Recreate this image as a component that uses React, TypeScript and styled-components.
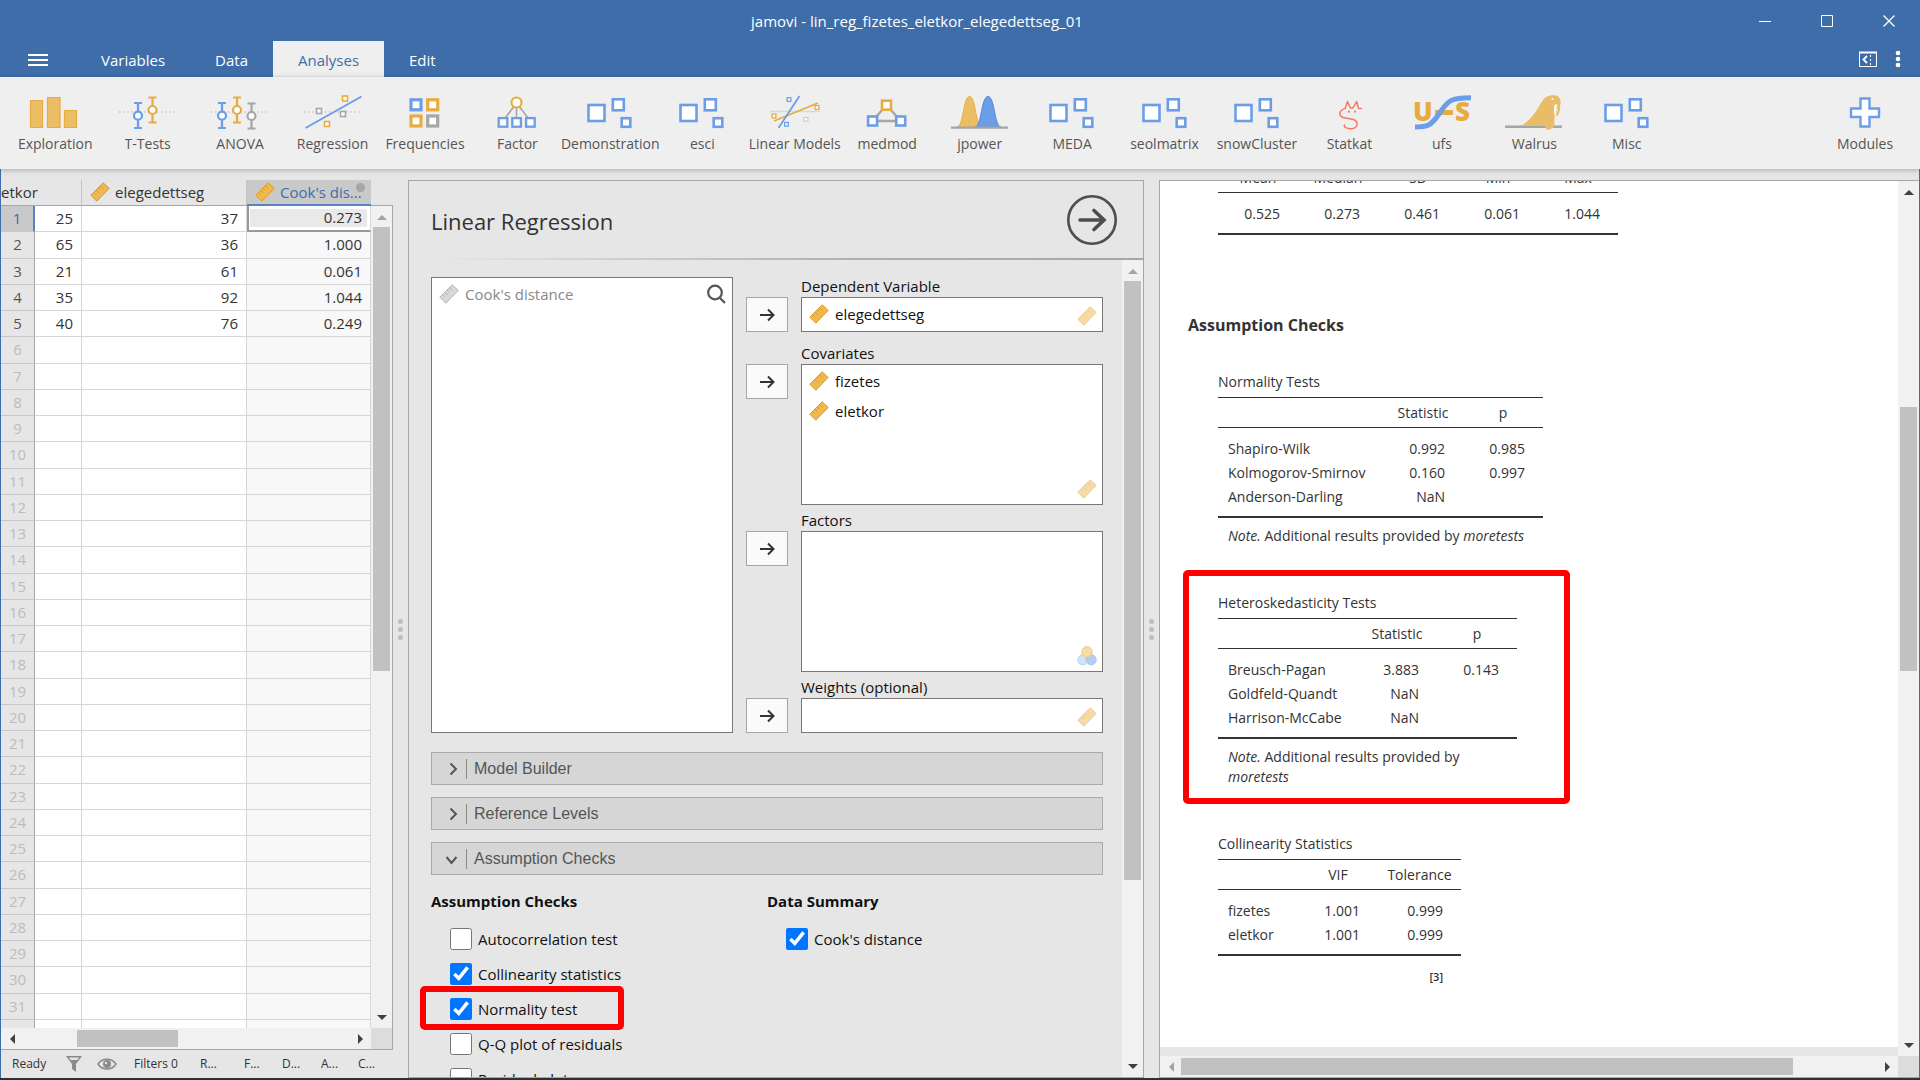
import React from "react";
import styled, { createGlobalStyle, css } from "styled-components";

const BLUE = "#3e6da9";
const ICON_BLUE = "#6b9de8";
const ICON_ORANGE = "#e6ac40";
const ICON_GREY = "#a6a6a6";

const GlobalStyle = createGlobalStyle`
  *, *::before, *::after { box-sizing: border-box; }
  body {
    margin: 0;
    background: #2d3036;
    color: #333;
    font-family: "Open Sans", "Noto Sans", sans-serif;
    font-size: 15px;
    line-height: 20px;
  }
  button { font: inherit; color: inherit; border: 0; padding: 0; background: none; }
`;

/* ---------- window ---------- */

const Window = styled.div`
  display: flex;
  flex-direction: column;
  height: 100vh;
  overflow: hidden;
  border-bottom: 2px solid #2d3036;
`;

const TitleBar = styled.header`
  display: grid;
  grid-template-columns: 1fr auto 1fr;
  align-items: center;
  flex: none;
  height: 41px;
  background: ${BLUE};
  color: #fff;
`;

const WindowTitle = styled.h1`
  grid-column: 2;
  margin: 0 86px 0 0;
  font-size: 15px;
  font-weight: 400;
`;

const WindowButtons = styled.div`
  display: flex;
  justify-content: flex-end;
`;

const WindowButton = styled.button`
  display: flex;
  align-items: center;
  justify-content: center;
  width: 62px;
  height: 40px;
`;

const TabBar = styled.nav`
  display: flex;
  flex: none;
  height: 36px;
  background: ${BLUE};
  color: #fff;
`;

const MenuButton = styled.button`
  display: flex;
  align-items: center;
  justify-content: center;
  width: 76px;
  padding-top: 2px;
`;

const Tab = styled.button<{ $active?: boolean }>`
  padding: 2px 25px 0;
  ${(p) => p.$active && css`background: #efefef; color: ${BLUE};`}
`;

const TabTools = styled.div`
  display: flex;
  align-items: center;
  gap: 18px;
  margin-left: auto;
  padding: 3px 19px 0 0;
`;

const Ribbon = styled.div`
  position: relative;
  z-index: 1;
  display: flex;
  flex: none;
  height: 92px;
  padding: 0 1px 0 9px;
  background: #efefef;
  box-shadow: 0 1px 5px rgba(0, 0, 0, 0.28);
`;

const RibbonItems = styled.div`
  display: grid;
  grid-template-columns: repeat(18, 1fr);
  flex: 1;
  padding-right: 138px;
`;

const RibbonButton = styled.button<{ $fixed?: boolean }>`
  display: flex;
  flex-direction: column;
  align-items: center;
  gap: 4px;
  min-width: 0;
  padding-top: 17px;
  color: #555;
  font-size: 14px;
  ${(p) => p.$fixed && css`width: 108px;`}
`;

const RibbonLabel = styled.span`
  width: max-content;
  max-width: 98px;
  overflow: hidden;
  white-space: nowrap;
`;

const Workspace = styled.main`
  display: flex;
  flex: 1;
  min-height: 0;
  padding-top: 11px;
  background: #e6e6e6;
  border-left: 1px solid ${BLUE};
  border-right: 1px solid ${BLUE};
`;

const Splitter = styled.div`
  display: flex;
  flex-direction: column;
  align-items: center;
  justify-content: center;
  gap: 3px;
  flex: none;
  width: 15px;
`;

const SplitterDot = styled.span`
  width: 5px;
  height: 5px;
  border-radius: 50%;
  background: #bdbdbd;
`;

/* ---------- scroll bars ---------- */

const Bar = styled.div<{ $horizontal?: boolean }>`
  display: flex;
  flex: none;
  flex-direction: ${(p) => (p.$horizontal ? "row" : "column")};
  ${(p) => (p.$horizontal ? "height: 21px;" : "width: 21px;")}
  background: #f1f1f1;
`;

const BarButton = styled.button`
  display: flex;
  align-items: center;
  justify-content: center;
  flex: none;
  width: 21px;
  height: 21px;
`;

const BarSpace = styled.div<{ $grow: number }>`
  flex: ${(p) => p.$grow} 1 0;
`;

const BarThumb = styled.div<{ $grow: number; $horizontal?: boolean }>`
  flex: ${(p) => p.$grow} 1 0;
  margin: ${(p) => (p.$horizontal ? "2px 0" : "0 2px")};
  background: #c1c1c1;
`;

const BarCorner = styled.div`
  flex: none;
  width: 21px;
  height: 21px;
  background: #dcdcdc;
`;

type ScrollProps = {
  horizontal?: boolean;
  parts: [number, number, number];
  startDisabled?: boolean;
};

function Arrow({ d, muted }: { d: string; muted?: boolean }) {
  return (
    <svg width="10" height="10" viewBox="0 0 10 10" aria-hidden="true">
      <path d={d} fill={muted ? "#a3a3a3" : "#404040"} />
    </svg>
  );
}

function ScrollBar({ horizontal, parts, startDisabled }: ScrollProps) {
  const [before, thumb, after] = parts;
  return (
    <Bar $horizontal={horizontal}>
      <BarButton aria-label="Scroll back">
        <Arrow muted={startDisabled} d={horizontal ? "M8 0V10L3 5Z" : "M0 8H10L5 3Z"} />
      </BarButton>
      <BarSpace $grow={before} />
      <BarThumb $grow={thumb} $horizontal={horizontal} />
      <BarSpace $grow={after} />
      <BarButton aria-label="Scroll forward">
        <Arrow d={horizontal ? "M2 0V10L7 5Z" : "M0 2H10L5 7Z"} />
      </BarButton>
    </Bar>
  );
}

/* ---------- data sheet ---------- */

const SheetPane = styled.section`
  display: flex;
  flex-direction: column;
  flex: none;
  width: 392px;
`;

const Sheet = styled.div`
  display: flex;
  flex: 1;
  min-height: 0;
`;

const SheetView = styled.div`
  flex: 1;
  min-width: 0;
  overflow: hidden;
`;

const SheetScroll = styled.div`
  display: flex;
  margin-top: 25px;
  border-top: 1px solid #a6a6a6;
  border-right: 1px solid #a6a6a6;
`;

const SheetFoot = styled.div`
  display: flex;
  flex: none;
  border-bottom: 1px solid #a6a6a6;
  border-right: 1px solid #a6a6a6;
  background: #f1f1f1;

  > :first-child { flex: 1; }
`;

const DataTable = styled.table`
  width: 100%;
  table-layout: fixed;
  border-collapse: separate;
  border-spacing: 0;
`;

const ColumnHead = styled.th<{ $selected?: boolean; $first?: boolean }>`
  position: relative;
  height: 26px;
  padding: 0 0 1px ${(p) => (p.$first ? 0 : 8)}px;
  overflow: hidden;
  border-bottom: 1px solid #a6a6a6;
  border-right: 1px solid #c4c4c4;
  font-weight: 400;
  text-align: left;
  white-space: nowrap;
  ${(p) =>
    p.$selected &&
    css`
      background: #c9c9c9;
      border-bottom: 2px solid #5684c0;
      border-right: 0;
      color: ${BLUE};
    `}
`;

const HeadContent = styled.span`
  display: flex;
  align-items: center;
  gap: 5px;
`;

const HeadBadge = styled.span`
  position: absolute;
  top: 3px;
  right: 6px;
  width: 9px;
  height: 9px;
  border-radius: 50%;
  background: #a6a6a6;
`;

const DataRow = styled.tr`
  height: 26px;
  &:nth-child(4n + 2) { height: 27px; }
`;

const RowHead = styled.th<{ $selected?: boolean; $empty?: boolean }>`
  padding: 0 0 2px;
  border-bottom: 1px solid #c8c8c8;
  border-right: 1px solid #a6a6a6;
  background: #e6e6e6;
  color: ${(p) => (p.$empty ? "#bcbcbc" : "#555")};
  font-weight: 400;
  ${(p) =>
    p.$selected &&
    css`
      background: #c9c9c9;
      border-right: 2px solid #5684c0;
      color: ${BLUE};
    `}
`;

const Cell = styled.td<{ $computed?: boolean; $selected?: boolean }>`
  padding: 0 8px 2px 0;
  border-bottom: 1px solid #d6d6d6;
  border-right: 1px solid #d6d6d6;
  background: ${(p) => (p.$computed ? "#f8f8f8" : "#fff")};
  text-align: right;
  ${(p) =>
    p.$selected &&
    css`
      background: #e9e9e9;
      border-bottom: 2px solid #999;
      box-shadow: inset 2px 0 #999, inset 0 0 0 3px #fff;
    `}
`;

const StatusBar = styled.footer`
  display: flex;
  align-items: center;
  flex: none;
  height: 28px;
  padding-left: 11px;
  font-size: 12px;
`;

const StatusItem = styled.span<{ $width: number }>`
  display: flex;
  width: ${(p) => p.$width}px;
`;

/* ---------- options ---------- */

const OptionsPane = styled.section`
  display: flex;
  flex-direction: column;
  flex: none;
  width: 736px;
  border: 1px solid #a6a6a6;
`;

const OptionsHead = styled.div`
  display: flex;
  align-items: center;
  justify-content: space-between;
  flex: none;
  height: 79px;
  padding: 0 26px 0 22px;
  border-bottom: 2px solid;
  border-image: linear-gradient(90deg, #e6e6e6 4%, #b0b0b0 60%, #a6a6a6) 1;
`;

const OptionsTitle = styled.h2`
  margin: 0;
  padding-top: 2px;
  font-size: 22px;
  font-weight: 400;
  line-height: 30px;
`;

const RunButton = styled.button`
  display: flex;
  width: 50px;
  height: 50px;
`;

const OptionsBody = styled.div`
  display: flex;
  flex: 1;
  min-height: 0;
`;

const OptionsContent = styled.div`
  flex: 1;
  min-width: 0;
  overflow: hidden;
  padding: 17px 19px 0 22px;
  color: #111;
`;

const Supplier = styled.div`
  display: grid;
  grid-template-columns: 1fr 42px 1fr;
  column-gap: 13px;
  margin-bottom: 19px;
`;

const VariableList = styled.div<{ $height?: number }>`
  position: relative;
  height: ${(p) => (p.$height ? p.$height + "px" : "auto")};
  padding-top: 1px;
  border: 1px solid #777;
  background: #fff;
`;

const VariableItem = styled.div<{ $muted?: boolean }>`
  display: flex;
  align-items: center;
  gap: 6px;
  height: 30px;
  padding-left: 7px;
  color: ${(p) => (p.$muted ? "#888" : "#111")};
`;

const SearchButton = styled.button`
  position: absolute;
  top: 6px;
  right: 6px;
  display: flex;
`;

const PermittedType = styled.span`
  position: absolute;
  right: 5px;
  bottom: 5px;
  display: flex;
  opacity: 0.5;
`;

const Targets = styled.div`
  display: grid;
  grid-template-columns: subgrid;
  grid-column: 2 / 4;
  row-gap: 6px;
`;

const Target = styled.div<{ $spaced?: boolean }>`
  display: grid;
  grid-template-columns: subgrid;
  grid-column: 1 / 3;
  ${(p) => p.$spaced && css`padding-bottom: 6px;`}
`;

const TargetLabel = styled.span`
  grid-column: 2;
  height: 20px;
  line-height: 18px;
`;

const AssignButton = styled.button`
  display: flex;
  align-items: center;
  justify-content: center;
  height: 35px;
  border: 1px solid #a6a6a6;
  background: #fafafa;
`;

const Collapser = styled.button`
  display: flex;
  align-items: center;
  width: 100%;
  height: 33px;
  margin-bottom: 12px;
  padding-left: 13px;
  border: 1px solid #a9a9a9;
  background: #d6d6d6;
  color: #555;
  font-family: "Liberation Sans", Arial, sans-serif;
  font-size: 16px;
`;

const CollapserLabel = styled.span`
  margin-left: 5px;
  padding-left: 7px;
  border-left: 1px solid #888;
`;

const CheckColumns = styled.div`
  display: grid;
  grid-template-columns: 1fr 1fr;
  padding-top: 4px;
`;

const CheckGroup = styled.fieldset`
  display: flex;
  flex-direction: column;
  align-items: flex-start;
  gap: 13px;
  min-width: 0;
  margin: 0;
  padding: 0 0 0 19px;
  border: 0;
`;

const CheckLegend = styled.legend`
  margin-left: -19px;
  padding: 0;
  margin-bottom: 17px;
  font-weight: 700;
`;

const CheckLabel = styled.label`
  position: relative;
  display: flex;
  align-items: center;
  gap: 6px;
  height: 22px;
`;

const CheckBox = styled.input`
  width: 22px;
  height: 22px;
  margin: 0;
  accent-color: #0075ff;
`;

const CheckMarker = styled.span`
  position: absolute;
  top: -12px;
  left: -30px;
  width: 204px;
  height: 44px;
  border: 6px solid #f00;
  border-radius: 5px;
`;

/* ---------- results ---------- */

const ResultsPane = styled.section`
  display: flex;
  flex: 1;
  flex-direction: column;
  min-width: 0;
  border: solid #a6a6a6;
  border-width: 1px 0 1px 1px;
`;

const ResultsBody = styled.div`
  display: flex;
  flex: 1;
  min-height: 0;
`;

const ResultsView = styled.div`
  flex: 1;
  min-width: 0;
  overflow: hidden;
  padding-left: 3px;
  border-bottom: 9px solid #e6e6e6;
  background: #fff;
`;

const ResultsContent = styled.div`
  margin-top: -19px;
  padding-left: 25px;
  font-size: 14px;
`;

const ResultsFoot = styled.div`
  display: flex;
  flex: none;

  > :first-child { flex: 1; }
`;

const ResultsHeading = styled.h3`
  margin: 78px 0 35px;
  font-size: 16px;
  font-weight: 700;
  line-height: 24px;
`;

const ResultBlock = styled.div`
  position: relative;
  width: max-content;
  margin: 0 0 47px 30px;
`;

const ResultTable = styled.table<{ $width: number }>`
  width: ${(p) => p.$width}px;
  table-layout: fixed;
  border-collapse: separate;
  border-spacing: 0;
`;

const Caption = styled.caption`
  padding-bottom: 5px;
  text-align: left;
  white-space: nowrap;
`;

const ResultHead = styled.th`
  height: 31px;
  padding: 0;
  border: solid #333;
  border-width: 1px 0;
  font-weight: 400;
`;

const ResultBody = styled.tbody`
  tr:first-child > * { height: 33px; padding-top: 9px; }
  tr:last-child > * { height: 33px; padding-bottom: 7px; border-bottom: 2px solid #333; }
  tr:first-child:last-child > * { height: 42px; }
`;

const RowLabel = styled.th`
  height: 24px;
  padding: 0 0 0 10px;
  font-weight: 400;
  text-align: left;
  white-space: nowrap;
`;

const ResultCell = styled.td`
  height: 24px;
  padding: 0 18px 0 0;
  text-align: right;
`;

const NoteCell = styled.td`
  padding: 8px 0 0 10px;
`;

const Reference = styled.td`
  padding: 11px 18px 0 0;
  font-size: 11px;
  font-weight: 600;
  text-align: right;
`;

const BlockMarker = styled.span`
  position: absolute;
  inset: -23px -53px -17px -35px;
  border: 6px solid #f00;
  border-radius: 5px;
`;

/* ---------- icons ---------- */

type RulerTone = "orange" | "grey";

function Ruler({ tone = "orange" }: { tone?: RulerTone }) {
  const fill = tone === "orange" ? "#f0b850" : "#d8d8d8";
  const line = tone === "orange" ? "#e09a20" : "#b4b4b4";
  return (
    <svg width="20" height="20" viewBox="0 0 20 20" aria-hidden="true">
      <path d="M13.2 .8 19.2 6.400 6.800 19.200 .8 13.200Z" fill={fill} stroke={line} />
      <path d="M3.500 10.500l2 2M5.700 8.200l3 3M8 6l2 2M10.300 3.600l3 3" stroke={line} fill="none" />
    </svg>
  );
}

function Nominal() {
  return (
    <svg width="20" height="20" viewBox="0 0 20 20" aria-hidden="true">
      <circle cx="5.8" cy="13.8" r="5" fill="#a8c6f4" stroke={ICON_BLUE} />
      <circle cx="14.2" cy="13.8" r="5" fill={ICON_BLUE} stroke="#5684d0" />
      <circle cx="10" cy="5.8" r="5.2" fill="#f0b850" stroke="#e09a20" />
    </svg>
  );
}

function Sq({ x, y, s, c, w = 2.6 }: { x: number; y: number; s: number; c: string; w?: number }) {
  return <rect x={x - s / 2} y={y - s / 2} width={s} height={s} fill="#fff" stroke={c} strokeWidth={w} />;
}

function Whisker({ x, top, mid, c }: { x: number; top: number; mid: number; c: string }) {
  return (
    <g stroke={c} strokeWidth="2.2" fill="none">
      <path d={`M${x - 4} ${top + 1}h8M${x - 4} ${top + 26}h8M${x} ${top + 1}v25`} />
      <circle cx={x} cy={mid} r="4" fill="#fff" />
    </g>
  );
}

const Dotted = () => (
  <path d="M1 18H59" stroke="#aaa" strokeWidth="1.2" strokeDasharray="1.2 3" fill="none" />
);

const blocks = (
  <>
    <Sq x={16.5} y={19} s={16} c={ICON_BLUE} />
    <Sq x={38.3} y={10.8} s={11} c={ICON_BLUE} />
    <Sq x={46} y={28.5} s={8.6} c={ICON_BLUE} />
  </>
);

const drawings: Record<string, React.ReactNode> = {
  bars: (
    <g fill="#ebbe66" stroke={ICON_ORANGE} strokeWidth="1.2">
      <path d="M5.5 6.5h12v27h-12ZM22.5 3.5h12.5v30h-12.5ZM39.5 16.5h12v17h-12Z" />
    </g>
  ),
  ttest: (
    <>
      <Dotted />
      <Whisker x={20} top={8} mid={21.7} c={ICON_BLUE} />
      <Whisker x={34.5} top={2.5} mid={16} c={ICON_ORANGE} />
    </>
  ),
  anova: (
    <>
      <Dotted />
      <Whisker x={12} top={8} mid={21.7} c={ICON_BLUE} />
      <Whisker x={27} top={2.5} mid={16} c={ICON_ORANGE} />
      <Whisker x={41.5} top={8.5} mid={22} c={ICON_GREY} />
    </>
  ),
  regression: (
    <>
      <Dotted />
      <path d="M2.5 34 58.5 2.5" stroke={ICON_BLUE} strokeWidth="2" />
      <Sq x={42} y={4.5} s={5} c={ICON_ORANGE} w={1.6} />
      <Sq x={16} y={17} s={5} c={ICON_GREY} w={1.6} />
      <Sq x={40} y={20} s={5} c={ICON_GREY} w={1.6} />
      <Sq x={24} y={30} s={5} c={ICON_ORANGE} w={1.6} />
    </>
  ),
  frequencies: (
    <>
      <Sq x={21} y={10.8} s={10} c={ICON_BLUE} w={3.2} />
      <Sq x={37.7} y={10.8} s={10} c={ICON_ORANGE} w={3.2} />
      <Sq x={21} y={27} s={10} c={ICON_ORANGE} w={3.2} />
      <Sq x={37.7} y={27} s={10} c={ICON_GREY} w={3.2} />
    </>
  ),
  factor: (
    <>
      <path d="M29.5 9 16 27M29.5 9V27M29.5 9 43.5 27" stroke={ICON_GREY} strokeWidth="1.6" />
      <circle cx="29.5" cy="8.5" r="5" fill="#fff" stroke={ICON_ORANGE} strokeWidth="2.2" />
      <Sq x={16} y={28.4} s={8.6} c={ICON_BLUE} w={2.3} />
      <Sq x={29.6} y={28.4} s={8.6} c={ICON_BLUE} w={2.3} />
      <Sq x={43.4} y={28.4} s={8.6} c={ICON_BLUE} w={2.3} />
    </>
  ),
  blocks,
  linear: (
    <>
      <path d="M5 17.5H55" stroke="#d8d8d8" strokeWidth="1.6" />
      <path d="M9 27 53 9" stroke={ICON_ORANGE} strokeWidth="1.7" />
      <path d="M13.5 34 34.5 2" stroke={ICON_BLUE} strokeWidth="1.7" />
      <Sq x={24} y={5.5} s={3.6} c={ICON_BLUE} w={1.3} />
      <Sq x={52} y={13.5} s={3.8} c={ICON_ORANGE} w={1.3} />
      <Sq x={9} y={22} s={3.8} c={ICON_ORANGE} w={1.3} />
      <Sq x={41} y={25.3} s={3.8} c="#d0d0d0" w={1.3} />
      <Sq x={21.5} y={30.3} s={3.6} c={ICON_BLUE} w={1.3} />
    </>
  ),
  medmod: (
    <>
      <path d="M29.5 11 15.5 27H43.7Z" stroke={ICON_GREY} strokeWidth="2.4" fill="none" />
      <Sq x={29.5} y={11.2} s={9} c={ICON_ORANGE} />
      <Sq x={15.6} y={27} s={9} c={ICON_BLUE} />
      <Sq x={43.7} y={27} s={9} c={ICON_BLUE} />
    </>
  ),
  jpower: (
    <>
      <path d="M7 33C14 32 13 2.5 19.500 2.5S25 32 32 33Z" fill="#ebbe66" stroke={ICON_ORANGE} />
      <path d="M25 33C32 32 31 2.500 38 2.500S44 32 51 33Z" fill={ICON_BLUE} stroke="#5a87cc" />
      <path d="M1 33.6H58" stroke={ICON_GREY} strokeWidth="2.4" />
    </>
  ),
  statkat: (
    <>
      <path
        d="M42.5 14.5H39.6L37.6 7.5 34 14 31.5 14 28.5 7.5 26.2 14.4C20 16.500 19 21 24 23.500L34.500 25.500C40 28 39 34 32.500 34.700C27.500 35 24.500 33 25.500 31"
        fill="none" stroke="#f47c5c" strokeWidth="1.5" strokeLinejoin="round" strokeLinecap="round"
      />
      <circle cx="30" cy="17.7" r="1.1" fill="#f47c5c" />
      <circle cx="36" cy="17.7" r="1.1" fill="#f47c5c" />
    </>
  ),
  ufs: (
    <>
      <g fill={ICON_ORANGE} fontFamily="Open Sans" fontWeight="800" fontSize="26">
        <text x="1" y="27">U</text>
        <text x="43" y="27">S</text>
      </g>
      <path d="M23 18.5H41" stroke={ICON_ORANGE} strokeWidth="5" />
      <path d="M3 33C15 33 19 32 27 20 36 6 39 3.800 59 3.800" fill="none" stroke={ICON_BLUE} strokeWidth="5" />
    </>
  ),
  walrus: (
    <>
      <path d="M1 32.700H58" stroke={ICON_GREY} strokeWidth="2.400" />
      <path d="M16 32C26 28 33 16 38 7.500 42 1 48 .8 52 1.600 56.500 3 57.500 7 56 11 52 14 51 19 50.500 25 50 29 51 31 49.500 34L43 36 41 32Z" fill="#e9bd68" />
      <path d="M50.500 11C49.500 16 50 19 51 22 51.500 17 52.500 14 53.500 10Z" fill="#fff" />
      <path d="M55 9C55.500 14 54.500 18 52.800 21.500" stroke="#e9bd68" strokeWidth="2.200" fill="none" />
      <circle cx="48.500" cy="5" r="1" fill="#fff" />
    </>
  ),
  plus: (
    <path
      d="M25.500 4.500h9v10h9.500v8.500h-9.500v9.500h-9v-9.500h-9.500v-8.500h9.500Z"
      fill="#fff" stroke={ICON_BLUE} strokeWidth="2.400"
    />
  ),
};

function Drawing({ name }: { name: string }) {
  return <svg width="60" height="36" viewBox="0 0 60 36" aria-hidden="true">{drawings[name]}</svg>;
}

/* ---------- data ---------- */

const modules: [string, string][] = [
  ["Exploration", "bars"],
  ["T-Tests", "ttest"],
  ["ANOVA", "anova"],
  ["Regression", "regression"],
  ["Frequencies", "frequencies"],
  ["Factor", "factor"],
  ["Demonstrations", "blocks"],
  ["esci", "blocks"],
  ["Linear Models", "linear"],
  ["medmod", "medmod"],
  ["jpower", "jpower"],
  ["MEDA", "blocks"],
  ["seolmatrix", "blocks"],
  ["snowCluster", "blocks"],
  ["Statkat", "statkat"],
  ["ufs", "ufs"],
  ["Walrus", "walrus"],
  ["Misc", "blocks"],
];

const records = [
  ["25", "37", "0.273"],
  ["65", "36", "1.000"],
  ["21", "61", "0.061"],
  ["35", "92", "1.044"],
  ["40", "76", "0.249"],
];

const rowNumbers = Array.from({ length: 32 }, (_, i) => i + 1);

type TargetSpec = {
  label: string;
  height: number;
  items: string[];
  type: "ruler" | "nominal";
  spaced?: boolean;
};

const targets: TargetSpec[] = [
  { label: "Dependent Variable", height: 35, items: ["elegedettseg"], type: "ruler", spaced: true },
  { label: "Covariates", height: 141, items: ["fizetes", "eletkor"], type: "ruler" },
  { label: "Factors", height: 141, items: [], type: "nominal" },
  { label: "Weights (optional)", height: 35, items: [], type: "ruler" },
];

type ResultSpec = {
  title?: string;
  width: number;
  columns: string[];
  widths: number[];
  rows: string[][];
  note?: boolean;
  reference?: string;
};

function Result({ title, width, columns, widths, rows, note, reference }: ResultSpec) {
  const labelled = columns[0] === "";
  return (
    <ResultTable $width={width}>
      {title && <Caption>{title}</Caption>}
      <colgroup>
        {widths.map((w, i) => <col key={i} width={w} />)}
      </colgroup>
      <thead>
        <tr>{columns.map((c, i) => <ResultHead key={i} scope="col">{c}</ResultHead>)}</tr>
      </thead>
      <ResultBody>
        {rows.map((row, r) => (
          <tr key={r}>
            {row.map((value, i) =>
              labelled && i === 0
                ? <RowLabel key={i} scope="row">{value}</RowLabel>
                : <ResultCell key={i}>{value}</ResultCell>
            )}
          </tr>
        ))}
      </ResultBody>
      {(note || reference) && (
        <tfoot>
          <tr>
            {note
              ? <NoteCell colSpan={columns.length}><i>Note.</i> Additional results provided by <i>moretests</i></NoteCell>
              : <Reference colSpan={columns.length}>{reference}</Reference>}
          </tr>
        </tfoot>
      )}
    </ResultTable>
  );
}

function Check({ label, checked, marked }: { label: string; checked?: boolean; marked?: boolean }) {
  return (
    <CheckLabel>
      <CheckBox type="checkbox" defaultChecked={checked} />
      {label}
      {marked && <CheckMarker />}
    </CheckLabel>
  );
}

function Section({ label, open }: { label: string; open?: boolean }) {
  return (
    <Collapser aria-expanded={!!open}>
      <svg width="16" height="16" viewBox="0 0 16 16" fill="none" stroke="#555" strokeWidth="2" aria-hidden="true">
        <path d={open ? "M1.500 6 6.500 12 11.500 6" : "M5.500 2.500 11 8 5.500 13.500"} />
      </svg>
      <CollapserLabel>{label}</CollapserLabel>
    </Collapser>
  );
}

function Grip() {
  return <Splitter><SplitterDot /><SplitterDot /><SplitterDot /></Splitter>;
}

/* ---------- page ---------- */

export default function App() {
  return (
    <>
      <GlobalStyle />
      <Window>
        <TitleBar>
          <WindowTitle>jamovi - lin_reg_fizetes_eletkor_elegedettseg_01</WindowTitle>
          <WindowButtons>
            <WindowButton aria-label="Minimise">
              <svg width="12" height="12" viewBox="0 0 12 12"><path d="M0 6.500H12" stroke="#fff" /></svg>
            </WindowButton>
            <WindowButton aria-label="Maximise">
              <svg width="12" height="12" viewBox="0 0 12 12"><path d="M.5.5h11v11H.5Z" stroke="#fff" fill="none" /></svg>
            </WindowButton>
            <WindowButton aria-label="Close">
              <svg width="12" height="12" viewBox="0 0 12 12"><path d="M.5.5 11.500 11.500M11.500.5.5 11.500" stroke="#fff" strokeWidth="1.300" /></svg>
            </WindowButton>
          </WindowButtons>
        </TitleBar>

        <TabBar>
          <MenuButton aria-label="Menu">
            <svg width="20" height="14" viewBox="0 0 20 14"><path d="M0 2H20M0 7H20M0 12H20" stroke="#fff" strokeWidth="2" /></svg>
          </MenuButton>
          <Tab>Variables</Tab>
          <Tab>Data</Tab>
          <Tab $active>Analyses</Tab>
          <Tab>Edit</Tab>
          <TabTools>
            <button aria-label="Toggle results">
              <svg width="18" height="16" viewBox="0 0 18 16" fill="none" stroke="#fff">
                <path d="M.5 1.500h17v14H.5Z" />
                <path d="M0 1.500H18" strokeWidth="2" />
                <path d="M8 5 4.500 8.500 8 12" strokeWidth="1.800" />
                <path d="M11.500 4V15" strokeDasharray="2 2" />
              </svg>
            </button>
            <button aria-label="Settings">
              <svg width="6" height="18" viewBox="0 0 6 18" fill="#fff">
                <circle cx="3" cy="3" r="2.300" /><circle cx="3" cy="9" r="2.300" /><circle cx="3" cy="15" r="2.300" />
              </svg>
            </button>
          </TabTools>
        </TabBar>

        <Ribbon>
          <RibbonItems>
            {modules.map(([name, icon]) => (
              <RibbonButton key={name}>
                <Drawing name={icon} />
                <RibbonLabel>{name}</RibbonLabel>
              </RibbonButton>
            ))}
          </RibbonItems>
          <RibbonButton $fixed>
            <Drawing name="plus" />
            <RibbonLabel>Modules</RibbonLabel>
          </RibbonButton>
        </Ribbon>

        <Workspace>
          <SheetPane>
            <Sheet>
              <SheetView>
                <DataTable>
                  <colgroup>
                    <col width="34" /><col width="47" /><col width="165" /><col />
                  </colgroup>
                  <thead>
                    <tr>
                      <ColumnHead $first colSpan={2} scope="col">etkor</ColumnHead>
                      <ColumnHead scope="col"><HeadContent><Ruler />elegedettseg</HeadContent></ColumnHead>
                      <ColumnHead $selected scope="col">
                        <HeadContent><Ruler />Cook's dis...</HeadContent>
                        <HeadBadge />
                      </ColumnHead>
                    </tr>
                  </thead>
                  <tbody>
                    {rowNumbers.map((n) => {
                      const record = records[n - 1] ?? ["", "", ""];
                      return (
                        <DataRow key={n}>
                          <RowHead scope="row" $selected={n === 1} $empty={n > records.length}>{n}</RowHead>
                          <Cell>{record[0]}</Cell>
                          <Cell>{record[1]}</Cell>
                          <Cell $computed $selected={n === 1}>{record[2]}</Cell>
                        </DataRow>
                      );
                    })}
                  </tbody>
                </DataTable>
              </SheetView>
              <SheetScroll>
                <ScrollBar parts={[0, 444, 336]} startDisabled />
              </SheetScroll>
            </Sheet>
            <SheetFoot>
              <ScrollBar horizontal parts={[55, 101, 172]} />
              <BarCorner />
            </SheetFoot>
            <StatusBar>
              <StatusItem $width={53}>Ready</StatusItem>
              <StatusItem $width={32}>
                <svg width="18" height="18" viewBox="0 0 18 18" aria-label="Filter">
                  <path d="M1 1H17L11 9V17L7 14V9Z" fill="#8a8a8a" /><path d="M4 2.500H14L12.500 5H5.500Z" fill="#e6e6e6" />
                </svg>
              </StatusItem>
              <StatusItem $width={37}>
                <svg width="20" height="18" viewBox="0 0 20 18" aria-label="Show filters">
                  <path d="M1 9C5 2.500 15 2.500 19 9 15 15.500 5 15.500 1 9Z" fill="none" stroke="#8a8a8a" strokeWidth="1.500" />
                  <circle cx="10" cy="9" r="4" fill="#8a8a8a" /><circle cx="9" cy="8" r="1.200" fill="#e6e6e6" />
                </svg>
              </StatusItem>
              <StatusItem $width={66}>Filters 0</StatusItem>
              <StatusItem $width={44}>R...</StatusItem>
              <StatusItem $width={38}>F...</StatusItem>
              <StatusItem $width={39}>D...</StatusItem>
              <StatusItem $width={37}>A...</StatusItem>
              <StatusItem $width={20}>C...</StatusItem>
            </StatusBar>
          </SheetPane>

          <Grip />

          <OptionsPane>
            <OptionsHead>
              <OptionsTitle>Linear Regression</OptionsTitle>
              <RunButton aria-label="Hide options">
                <svg width="50" height="50" viewBox="0 0 50 50" fill="none" stroke="#4d4d4d">
                  <circle cx="25" cy="25" r="23.700" strokeWidth="2.600" />
                  <path d="M13 25H36M27 15.500 37 25 27 34.500" strokeWidth="3.600" strokeLinecap="round" />
                </svg>
              </RunButton>
            </OptionsHead>
            <OptionsBody>
              <OptionsContent>
                <Supplier>
                  <VariableList>
                    <VariableItem $muted><Ruler tone="grey" />Cook's distance</VariableItem>
                    <SearchButton aria-label="Search">
                      <svg width="20" height="20" viewBox="0 0 20 20" fill="none" stroke="#555" strokeWidth="2.200">
                        <circle cx="9" cy="8.500" r="6.800" /><path d="M13.500 13.500 19 19" />
                      </svg>
                    </SearchButton>
                  </VariableList>
                  <Targets>
                    {targets.map((t) => (
                      <Target key={t.label} $spaced={t.spaced}>
                        <TargetLabel>{t.label}</TargetLabel>
                        <AssignButton aria-label={"Assign to " + t.label}>
                          <svg width="16" height="16" viewBox="0 0 16 16" fill="none" stroke="#333" strokeWidth="2">
                            <path d="M1 8H14.500M9 2.500 14.500 8 9 13.500" />
                          </svg>
                        </AssignButton>
                        <VariableList $height={t.height}>
                          {t.items.map((v) => <VariableItem key={v}><Ruler />{v}</VariableItem>)}
                          <PermittedType>{t.type === "ruler" ? <Ruler /> : <Nominal />}</PermittedType>
                        </VariableList>
                      </Target>
                    ))}
                  </Targets>
                </Supplier>
                <Section label="Model Builder" />
                <Section label="Reference Levels" />
                <Section label="Assumption Checks" open />
                <CheckColumns>
                  <CheckGroup>
                    <CheckLegend>Assumption Checks</CheckLegend>
                    <Check label="Autocorrelation test" />
                    <Check label="Collinearity statistics" checked />
                    <Check label="Normality test" checked marked />
                    <Check label="Q-Q plot of residuals" />
                    <Check label="Residual plots" />
                  </CheckGroup>
                  <CheckGroup>
                    <CheckLegend>Data Summary</CheckLegend>
                    <Check label="Cook's distance" checked />
                  </CheckGroup>
                </CheckColumns>
              </OptionsContent>
              <ScrollBar parts={[0, 600, 176]} startDisabled />
            </OptionsBody>
          </OptionsPane>

          <Grip />

          <ResultsPane>
            <ResultsBody>
              <ResultsView>
                <ResultsContent>
                  <ResultBlock>
                    <Result
                      width={400}
                      columns={["Mean", "Median", "SD", "Min", "Max"]}
                      widths={[80, 80, 80, 80, 80]}
                      rows={[["0.525", "0.273", "0.461", "0.061", "1.044"]]}
                    />
                  </ResultBlock>
                  <ResultsHeading>Assumption Checks</ResultsHeading>
                  <ResultBlock>
                    <Result
                      title="Normality Tests"
                      width={325}
                      columns={["", "Statistic", "p"]}
                      widths={[165, 80, 80]}
                      rows={[
                        ["Shapiro-Wilk", "0.992", "0.985"],
                        ["Kolmogorov-Smirnov", "0.160", "0.997"],
                        ["Anderson-Darling", "NaN", ""],
                      ]}
                      note
                    />
                  </ResultBlock>
                  <ResultBlock>
                    <Result
                      title="Heteroskedasticity Tests"
                      width={299}
                      columns={["", "Statistic", "p"]}
                      widths={[139, 80, 80]}
                      rows={[
                        ["Breusch-Pagan", "3.883", "0.143"],
                        ["Goldfeld-Quandt", "NaN", ""],
                        ["Harrison-McCabe", "NaN", ""],
                      ]}
                      note
                    />
                    <BlockMarker />
                  </ResultBlock>
                  <ResultBlock>
                    <Result
                      title="Collinearity Statistics"
                      width={243}
                      columns={["", "VIF", "Tolerance"]}
                      widths={[80, 80, 83]}
                      rows={[
                        ["fizetes", "1.001", "0.999"],
                        ["eletkor", "1.001", "0.999"],
                      ]}
                      reference="[3]"
                    />
                  </ResultBlock>
                </ResultsContent>
              </ResultsView>
              <ScrollBar parts={[205, 265, 364]} />
            </ResultsBody>
            <ResultsFoot>
              <ScrollBar horizontal parts={[0, 611, 84]} startDisabled />
              <BarCorner />
            </ResultsFoot>
          </ResultsPane>
        </Workspace>
      </Window>
    </>
  );
}
